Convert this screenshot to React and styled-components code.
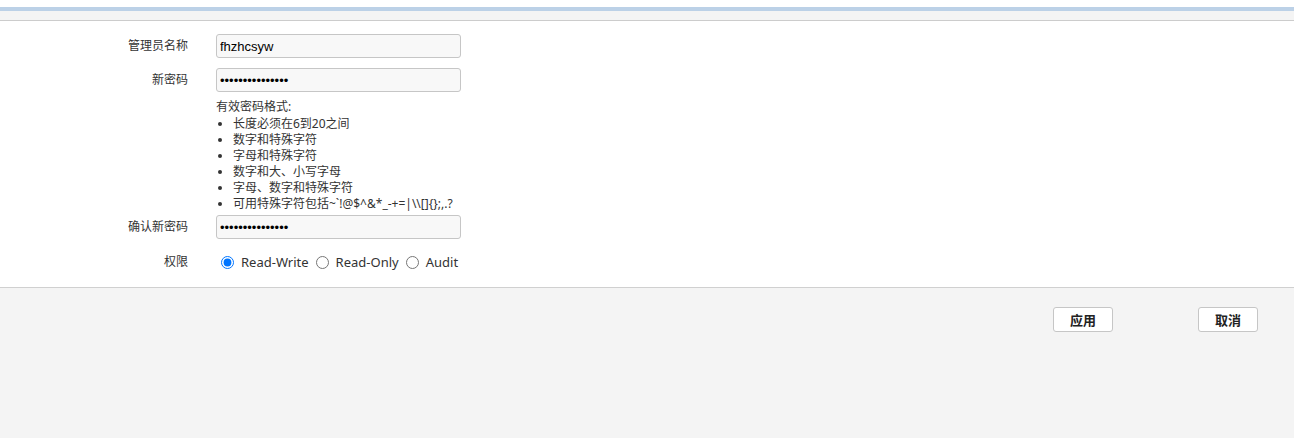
import React, { useState } from 'react'
import styled, { createGlobalStyle } from 'styled-components'

const GlobalStyle = createGlobalStyle`
  html, body {
    margin: 0;
    padding: 0;
    background: #ffffff;
    font-family: "Noto Sans", "Noto Sans CJK SC", sans-serif;
    color: #333333;
  }
`

const Page = styled.div`
  display: flex;
  flex-direction: column;
  min-height: 438px;
  padding-top: 7px;
  box-sizing: border-box;
`

const TopBar = styled.div`
  height: 9px;
  background: #f4f4f4;
  border-top: 4px solid #bcd1e7;
  border-bottom: 1px solid #cccccc;
`

const Form = styled.div`
  padding: 13px 0 15px;
  display: grid;
  grid-template-columns: 188px 245px;
  column-gap: 28px;
  align-items: center;
`

const Label = styled.div`
  text-align: right;
  font-size: 12px;
  color: #333333;
  line-height: 16px;
  margin-top: ${(p) => p.$top || 0}px;
`

const Field = styled.div`
  margin-top: ${(p) => p.$top || 0}px;
`

const Input = styled.input`
  display: block;
  box-sizing: border-box;
  width: 245px;
  height: 24px;
  margin: 0;
  padding: 0 3px;
  border: 1px solid #c6c6c6;
  border-radius: 3px;
  background: #f8f8f8;
  font-family: "Liberation Sans", Arial, sans-serif;
  font-size: 13px;
  color: #000000;
  outline: none;
`

const Hint = styled.div`
  grid-column: 2;
  margin-top: 7px;
  font-size: 12px;
  line-height: 16px;
  color: #333333;
  white-space: nowrap;
`

const HintList = styled.ul`
  margin: 1px 0 0;
  padding-left: 17px;
  li {
    line-height: 16px;
  }
`

const Radios = styled.div`
  display: flex;
  align-items: center;
  font-size: 13px;
  color: #333333;
  height: 20px;
  white-space: nowrap;
`

const RadioLabel = styled.label`
  display: flex;
  align-items: center;
  flex-shrink: 0;
  margin-right: 2px;
  input {
    margin: 0 7px 0 5px;
    width: 13px;
    height: 13px;
  }
`

const Footer = styled.div`
  flex: 1;
  background: #f4f4f4;
  border-top: 1px solid #d0d0d0;
  display: flex;
  justify-content: flex-end;
  align-items: flex-start;
  gap: 85px;
  padding: 19px 36px 0 0;
`

const Button = styled.button`
  width: 60px;
  height: 25px;
  box-sizing: border-box;
  border: 1px solid #c6c6c6;
  border-radius: 3px;
  background: #ffffff;
  font-family: "Noto Sans CJK SC", sans-serif;
  font-weight: 700;
  font-size: 13px;
  color: #222222;
  padding: 0;
  cursor: pointer;
`

export default function App() {
  const [role, setRole] = useState('rw')
  const rules = [
    '长度必须在6到20之间',
    '数字和特殊字符',
    '字母和特殊字符',
    '数字和大、小写字母',
    '字母、数字和特殊字符',
    '可用特殊字符包括~`!@$^&*_-+=|\\\\[]{};,.?',
  ]

  return (
    <>
      <GlobalStyle />
      <Page>
        <TopBar />
        <Form>
          <Label>管理员名称</Label>
          <Field>
            <Input type='text' defaultValue='fhzhcsyw' />
          </Field>

          <Label $top={10}>新密码</Label>
          <Field $top={10}>
            <Input type='password' defaultValue='abcdefghijklmno' />
          </Field>

          <Hint>
            有效密码格式:
            <HintList>
              {rules.map((r) => (
                <li key={r}>{r}</li>
              ))}
            </HintList>
          </Hint>

          <Label $top={3}>确认新密码</Label>
          <Field $top={3}>
            <Input type='password' defaultValue='abcdefghijklmno' />
          </Field>

          <Label $top={13}>权限</Label>
          <Field $top={13}>
            <Radios>
              <RadioLabel>
                <input type='radio' name='role' checked={role === 'rw'} onChange={() => setRole('rw')} />
                Read-Write
              </RadioLabel>
              <RadioLabel>
                <input type='radio' name='role' checked={role === 'ro'} onChange={() => setRole('ro')} />
                Read-Only
              </RadioLabel>
              <RadioLabel>
                <input type='radio' name='role' checked={role === 'au'} onChange={() => setRole('au')} />
                Audit
              </RadioLabel>
            </Radios>
          </Field>
        </Form>
        <Footer>
          <Button>应用</Button>
          <Button>取消</Button>
        </Footer>
      </Page>
    </>
  )
}
